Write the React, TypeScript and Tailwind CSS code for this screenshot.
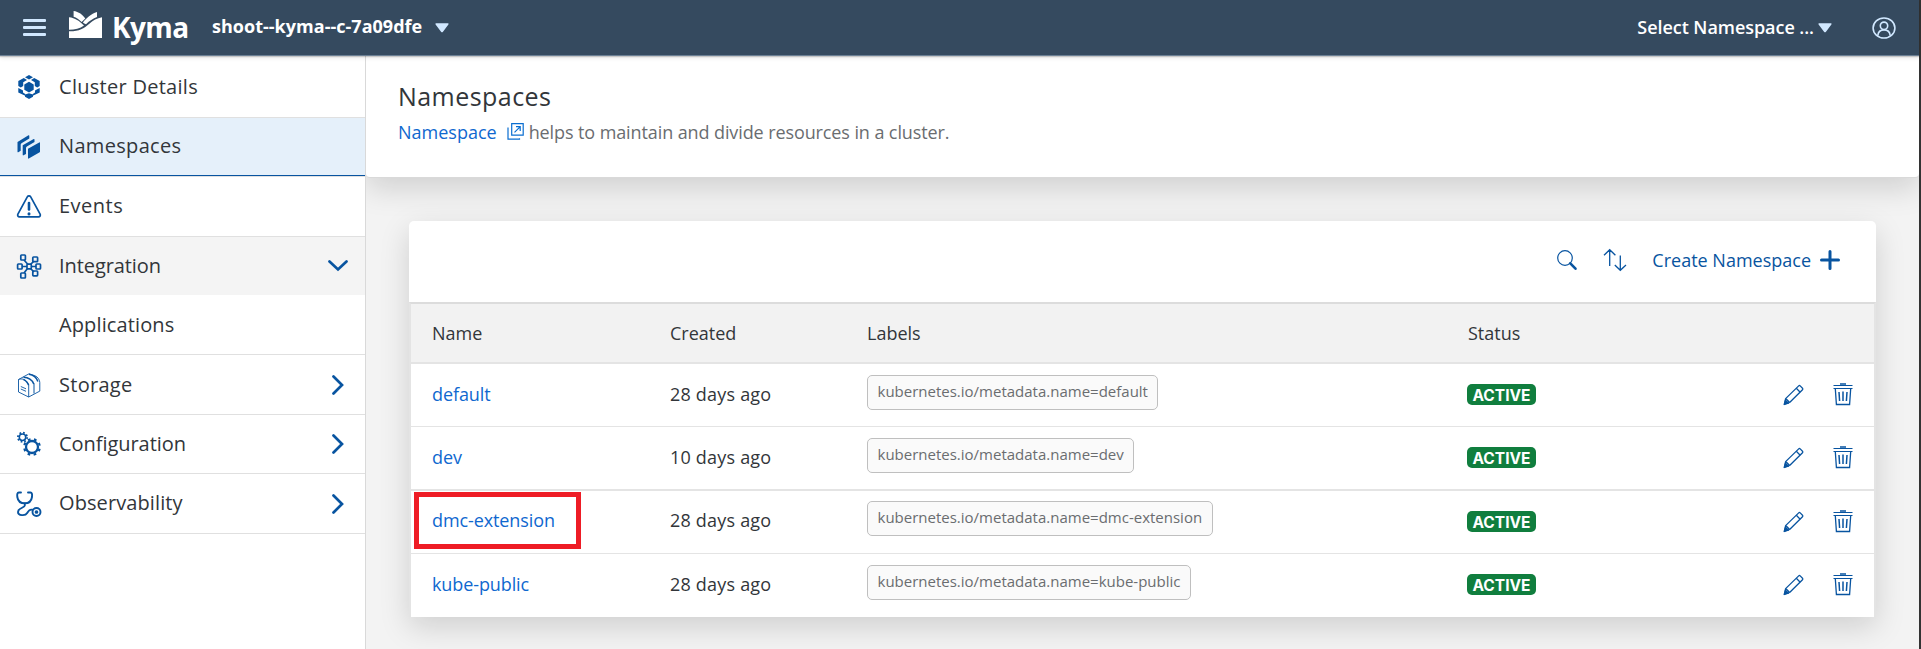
import type { ReactNode } from "react";

const OPEN = "font-['Open_Sans','Liberation_Sans',sans-serif]";

function Caret() {
  return (
    <svg width="14" height="10" viewBox="0 0 14 10" fill="#d1e8ff">
      <path d="M1.2 0.3h11.6c.7 0 1 .7.6 1.2L7.8 8.9c-.4.6-1.2.6-1.6 0L.6 1.500C.2 1 .5.3 1.200.3z" />
    </svg>
  );
}

function Logo() {
  return (
    <svg width="33" height="27" viewBox="0 0 33 27" fill="#fff">
      <path d="M0 20.300C10 20.500 15 17.500 20 13 24 9.300 28 7.200 33 6.300V27H0z" />
      <path d="M0 6.300C6 7 10.500 10 15 14.600 11 17.800 6 18.700 0 18.800z" />
      <path d="M4.600 0C9.500.6 14 3.800 16.300 7.600L12.600 11C10 8.300 7.500 6.700 4.600 5.700z" />
      <path d="M28 1v5C24 7.600 20.500 9.800 17 13.200 15.800 12.900 14.700 12.200 13.900 11.400 17.500 7 22 2.800 28 1z" />
    </svg>
  );
}

function Avatar() {
  return (
    <svg width="24" height="24" viewBox="0 0 24 24" fill="none" stroke="#d1e8ff" strokeWidth="1.6">
      <ellipse cx="12" cy="12" rx="10.900" ry="10" />
      <circle cx="12" cy="9.800" r="3.700" />
      <path d="M5.800 19.500c.4-3.600 2.800-5.600 6.200-5.600s5.800 2 6.200 5.600" />
    </svg>
  );
}

const svg = { width: 26, height: 26, viewBox: "0 0 26 26", fill: "none", stroke: "#0854a0" };

function ClusterIcon() {
  return (
    <svg {...svg} fill="#0854a0" stroke="none">
      <path d="M13 1l4 2.200-4 2.200-4-2.200z" />
      <path d="M7.800 4l3.200 2-3.800 2.300V12l-2.400 1.400L2.300 12V7z" />
      <path d="M18.200 4L15 6l3.800 2.300V12l2.400 1.400 2.500-1.400V7z" />
      <path d="M13 7.800l4.700 2.700v5.300L13 18.500l-4.700-2.700v-5.300z" />
      <path d="M2.300 13.900l2.500 1.400 2.200 1.200v2l2.200 1.400v1.900L2.300 18.500z" />
      <path d="M23.700 13.900l-2.500 1.400-2.200 1.200v2l-2.200 1.400v1.900l6.900-3.300z" />
      <path d="M9 20.600l4-1.400 4 1.400v2.200L13 25l-4-2.200z" />
    </svg>
  );
}

function NamespaceIcon() {
  return (
    <svg {...svg} fill="#0854a0" stroke="none">
      <path d="M1.500 8L12.500 1.300c.4-.2.8 0 .8.400v2.700L5.500 9.200c-.6.400-.8.900-.8 1.500v6.100l-2.400 1.400c-.4.200-.8 0-.8-.5z" />
      <path d="M6.700 11.300l11-6.300c.4-.2.8 0 .8.400v2.600l-7.600 4.500c-.6.400-.9 1-.9 1.600v5.900l-2.500 1.300c-.4.200-.8 0-.8-.5z" />
      <path d="M12 14.800l11.200-6.400c.4-.2.800 0 .800.500v8.800l-.3.500-10.900 6.400c-.4.200-.8 0-.8-.5z" />
    </svg>
  );
}

function EventsIcon() {
  return (
    <svg {...svg} strokeWidth="1.700" strokeLinejoin="round" strokeLinecap="round">
      <path d="M11.300 2.900c.8-1.400 2.600-1.400 3.400 0l9.400 17.300c.7 1.300-.1 2.600-1.600 2.600h-19c-1.500 0-2.300-1.300-1.600-2.600z" />
      <path d="M13 9v6.500" strokeWidth="2.600" />
      <path d="M13 19.800v.1" strokeWidth="3" />
    </svg>
  );
}

function IntegrationIcon() {
  return (
    <svg {...svg} strokeWidth="1.700">
      <path d="M8 7l4 4.500M17.500 8.500L14.500 11.500M6 13.500h5M15.500 13.500H20M11.500 15.500L8 20M14.500 15.500l3.500 3.500" />
      <rect x="4.800" y="2" width="4.600" height="5" rx=".7" />
      <rect x="16.800" y="4" width="4.800" height="4.600" rx=".7" />
      <rect x="1.600" y="11" width="4.500" height="5" rx=".7" />
      <rect x="11" y="11.200" width="4.300" height="4.600" rx=".7" />
      <rect x="20" y="11" width="4.500" height="5" rx=".7" />
      <rect x="4.800" y="20" width="4.600" height="5" rx=".7" />
      <rect x="16.800" y="18" width="4.800" height="4.800" rx=".7" />
    </svg>
  );
}

function StorageIcon() {
  return (
    <svg {...svg} strokeWidth=".9" strokeLinejoin="round">
      <path d="M2.500 7.500c3-1 6.200-.8 8.600 2.600l1.600 3V25L2.500 20z" />
      <path d="M2.500 7.500L13 1.800l5.800 1.900c3.300 1.300 5 4.300 5 7v8.400L12.700 25" />
      <path d="M18 11.500v10" strokeWidth="1" />
      <path d="M7.500 5.200C12 5.300 16 7.500 17.800 12M13 2.300c4.800.8 7.600 3.200 8.900 7.200M7.500 7.600c2.500.9 4.200 3 5.200 5.700" strokeWidth="1.500" />
      <path d="M4.800 14.500l5.200 2.300M4.800 17l5.200 2.300" />
    </svg>
  );
}

function ConfigIcon() {
  return (
    <svg {...svg}>
      <circle cx="6.500" cy="6.300" r="3.200" strokeWidth="1.500" />
      <circle cx="6.500" cy="6.300" r="4.600" strokeWidth="1.800" strokeDasharray="1.700 1.913" />
      <circle cx="16" cy="16" r="6" strokeWidth="2.300" />
      <circle cx="16" cy="16" r="7.800" strokeWidth="2.200" strokeDasharray="2.700 3.426" strokeDashoffset="-1.700" />
    </svg>
  );
}

function ObservabilityIcon() {
  return (
    <svg {...svg} strokeWidth="1.900" strokeLinecap="round">
      <path d="M5 1.500H2.800C1.300 1.500 1 3.500 1.300 6 1.800 9.500 4.500 12.300 8.800 12.300s6.700-2.800 7.200-6.300c.3-2.500 0-4.500-1.500-4.500H12" />
      <path d="M8.800 12.500v2c0 2.400-6.800 2.300-6.800 6.400 0 3.800 7.300 4.300 9.200 1.200 1.300-2.200 2-3.900 5-3.400" />
      <circle cx="20.500" cy="21" r="4" />
      <circle cx="20.500" cy="21" r=".9" fill="#0854a0" />
    </svg>
  );
}

function Chevron({ down = false }: { down?: boolean }) {
  return (
    <svg width="20" height="20" viewBox="0 0 20 20" fill="none" stroke="#0854a0" strokeWidth="2.700" strokeLinecap="round" strokeLinejoin="miter">
      <path d={down ? "M1.500 5.500l8.500 8 8.500-8" : "M5.500 1.500l8.500 8.500-8.500 8.500"} />
    </svg>
  );
}

type ItemProps = { label: string; icon?: ReactNode; box: string; text?: string; chevron?: "right" | "down" };

function NavItem({ label, icon, box, text = "pb-[2px]", chevron }: ItemProps) {
  return (
    <li className={`flex items-center ${box}`}>
      <span className="ml-[16px] w-[26px]">{icon}</span>
      <span className={`ml-[17px] flex-1 text-[20px] leading-[28px] ${text}`}>{label}</span>
      {chevron && (
        <span className="mr-[17px]">
          <Chevron down={chevron === "down"} />
        </span>
      )}
    </li>
  );
}

function Pencil() {
  return (
    <svg width="22" height="22" viewBox="0 0 22 22" fill="none" stroke="#0854a0" strokeWidth="1.300" strokeLinejoin="round">
      <path d="M2.600 14.600L15.700 1.900c.5-.5 1-.5 1.500 0l2.300 2.300c.5.5.5 1 0 1.500L6.600 18.500l-5.100 1.700z" />
      <path d="M13.300 4.300l3.900 3.900M3 14.800l3.400 3.500" />
      <path d="M1.200 20.500l1.300-4.200 2.900 2.900z" fill="#0854a0" />
    </svg>
  );
}

function Trash() {
  return (
    <svg width="20" height="23" viewBox="0 0 20 23" fill="none" stroke="#0854a0" strokeWidth="1.200">
      <path d="M7 1h6" strokeWidth="1.500" />
      <path d="M.5 2.500h19M.5 5.500h19" />
      <path d="M2.300 5.500l1.100 16h13.200l1.100-16" strokeWidth="1.300" />
      <path d="M6 9l.6 9M10 8.500V18M14 9l-.6 9" strokeWidth="1.500" />
    </svg>
  );
}

const rows = [
  { name: "default", age: "28 days ago", box: "h-[63px] border-b", top: "pt-[18px]", labelTop: "pt-[11px]", boxed: false },
  { name: "dev", age: "10 days ago", box: "h-[64px] border-b-2", top: "pt-[18px]", labelTop: "pt-[11px]", boxed: false },
  { name: "dmc-extension", age: "28 days ago", box: "h-[63px] border-b", top: "pt-[17px]", labelTop: "pt-[10px]", boxed: true },
  { name: "kube-public", age: "28 days ago", box: "h-[62px]", top: "pt-[18px]", labelTop: "pt-[11px]", boxed: false },
];

const cols = "grid grid-cols-[237px_198px_600px_1fr] pl-[21px]";

export default function App() {
  return (
    <div className={`flex h-[649px] w-[1921px] overflow-hidden bg-[#333] text-[#32363a] ${OPEN}`}>
      <div className="flex w-[1919px] flex-col bg-[#f3f3f3]">
        <header className="relative z-20 flex h-[56px] shrink-0 items-center border-b border-[#6a7f94] bg-[#354a5f] text-white shadow-[0_1px_1px_rgba(0,0,0,0.16),0_2px_4px_rgba(0,0,0,0.1)]">
          <svg className="ml-[23px]" width="23" height="17" viewBox="0 0 23 17" fill="#d1e8ff">
            <rect width="23" height="3" rx="1" />
            <rect y="7" width="23" height="3" rx="1" />
            <rect y="14" width="23" height="3" rx="1" />
          </svg>
          <span className="mb-[7px] ml-[23px]">
            <Logo />
          </span>
          <span className="ml-[10px] w-[100px] pb-[1px] text-[28px] leading-[36px] font-bold tracking-[-0.6px]">Kyma</span>
          <span className="pb-[4px] text-[18px] leading-[24px] font-bold tracking-[0.02px]">shoot--kyma--c-7a09dfe</span>
          <span className="ml-[13px]">
            <Caret />
          </span>
          <span className="ml-auto pb-[2px] text-[18px] leading-[24px] font-semibold tracking-[-0.05px]">Select Namespace ...</span>
          <span className="ml-[4px]">
            <Caret />
          </span>
          <span className="mr-[23px] ml-[40px]">
            <Avatar />
          </span>
        </header>

        <div className="flex min-h-0 flex-1">
          <nav className="relative z-10 w-[366px] shrink-0 border-r border-[#d9d9d9] bg-white">
            <ul className="flex flex-col">
              <NavItem label="Cluster Details" icon={<ClusterIcon />} box="h-[62px] border-b border-[#e0e0e0]" text="tracking-[0.28px]" />
              <NavItem label="Namespaces" icon={<NamespaceIcon />} box="h-[59px] border-b border-[#e0e0e0] bg-[#e5f0fa] shadow-[inset_0_-1px_0_#0854a0]" text="pb-[2px] tracking-[0.33px]" />
              <NavItem label="Events" icon={<EventsIcon />} box="h-[60px] border-b border-[#e0e0e0]" text="pb-[2px] tracking-[0.5px]" />
              <NavItem label="Integration" icon={<IntegrationIcon />} box="h-[58px] bg-[#f4f4f4]" text="tracking-[-0.08px]" chevron="down" />
              <NavItem label="Applications" box="h-[60px] border-b border-[#e0e0e0]" text="tracking-[0.12px]" />
              <NavItem label="Storage" icon={<StorageIcon />} box="h-[60px] border-b border-[#e0e0e0]" text="tracking-[0.28px]" chevron="right" />
              <NavItem label="Configuration" icon={<ConfigIcon />} box="h-[59px] border-b border-[#e0e0e0]" text="tracking-[-0.05px]" chevron="right" />
              <NavItem label="Observability" icon={<ObservabilityIcon />} box="h-[60px] border-b border-[#e0e0e0]" text="pb-[2px] tracking-[0.1px]" chevron="right" />
            </ul>
          </nav>

          <main className="flex min-w-0 flex-1 flex-col overflow-hidden">
            <section className="h-[122px] shrink-0 rounded-b-[4px] border-b border-[#d9d9d9] bg-white pt-[23px] pl-[32px] shadow-[0_10px_30px_rgba(0,0,0,0.15)]">
              <h1 className="text-[25px] leading-[34px] tracking-[0.45px]">Namespaces</h1>
              <p className="mt-[7px] flex items-center text-[18px] leading-[24px] text-[#6a6d70]">
                <a className="text-[#0f68cf]">Namespace</a>
                <svg className="mb-[2px] ml-[10px]" width="17" height="17" viewBox="0 0 17 17" fill="none" stroke="#0a6ed1" strokeWidth="1.200">
                  <path d="M4.700.7h11.500v11.500H4.700z" />
                  <path d="M1 4.500v11.700h11.500v-1M7.500 9.300l5.500-5.500M9 3.700h4.200v4.200" />
                </svg>
                <span className="ml-[5px] tracking-[-0.1px]">helps to maintain and divide resources in a cluster.</span>
              </p>
            </section>

            <section className="mt-[43px] ml-[43px] flex h-[396px] w-[1467px] shrink-0 flex-col rounded-t-[5px] bg-white shadow-[0_10px_30px_rgba(0,0,0,0.15)]">
              <div className="flex h-[81px] items-center pb-[3px] text-[#0854a0]">
                <svg className="ml-auto" width="22" height="22" viewBox="0 0 22 22" fill="none" stroke="#0854a0">
                  <circle cx="9" cy="9" r="7.300" strokeWidth="1.200" />
                  <path d="M14.300 14.300l5.200 5.400" strokeWidth="2.600" strokeLinecap="round" />
                </svg>
                <svg className="ml-[25px]" width="24" height="24" viewBox="0 0 24 24" fill="none" stroke="#0854a0" strokeWidth="1.300">
                  <path d="M6.700 18V1.800M1 7.300l5.700-5.600 5.700 5.600M17.300 7.500v14.700M11.800 17l5.500 5.300 5.700-5.300" />
                </svg>
                <span className="mr-[9px] ml-[25px] text-[18px] leading-[24px]">Create Namespace</span>
                <svg className="mr-[36px]" width="20" height="20" viewBox="0 0 20 20" fill="none" stroke="#0854a0" strokeWidth="3" strokeLinecap="round">
                  <path d="M10 1.500v17M1.500 10h17" />
                </svg>
              </div>

              <div className="h-[315px] border-x-2 border-t-2 border-[#e4e4e4] border-t-[#dcdcdc] text-[18px] leading-[24px]">
                <div className={`${cols} h-[60px] items-center border-b-2 border-[#e4e4e4] bg-[#f2f2f2]`}>
                  <span>Name</span>
                  <span className="pl-[1px]">Created</span>
                  <span>Labels</span>
                  <span className="pl-[1px]">Status</span>
                </div>
                {rows.map((r) => (
                  <div key={r.name} className={`${cols} border-[#e4e4e4] ${r.box}`}>
                    <div className={`relative ${r.top}`}>
                      <a className="tracking-[-0.1px] text-[#0f68cf]">{r.name}</a>
                      {r.boxed && <div className="absolute top-[1px] -left-[18px] h-[57px] w-[167px] border-[5px] border-[#ee1c25]" />}
                    </div>
                    <div className={`pl-[1px] tracking-[0.2px] ${r.top}`}>{r.age}</div>
                    <div className={r.labelTop}>
                      <span className="inline-block h-[35px] rounded-[5px] border border-[#bfbfbf] bg-[#fafafa] px-[9.5px] text-[15px] leading-[31px] text-[#6a6d70]">
                        kubernetes.io/metadata.name={r.name}
                      </span>
                    </div>
                    <div className="flex items-start">
                      <span className="mt-[20px] flex h-[21px] w-[69px] items-center justify-center rounded-[5px] bg-[#107e3e] pt-[2px] font-['Inter','Liberation_Sans',sans-serif] text-[15.500px] leading-[20px] font-bold text-white">
                        ACTIVE
                      </span>
                      <span className="mt-[20px] ml-auto">
                        <Pencil />
                      </span>
                      <span className="mt-[19px] mr-[21px] ml-[28px]">
                        <Trash />
                      </span>
                    </div>
                  </div>
                ))}
              </div>
            </section>
          </main>
        </div>
      </div>
    </div>
  );
}
